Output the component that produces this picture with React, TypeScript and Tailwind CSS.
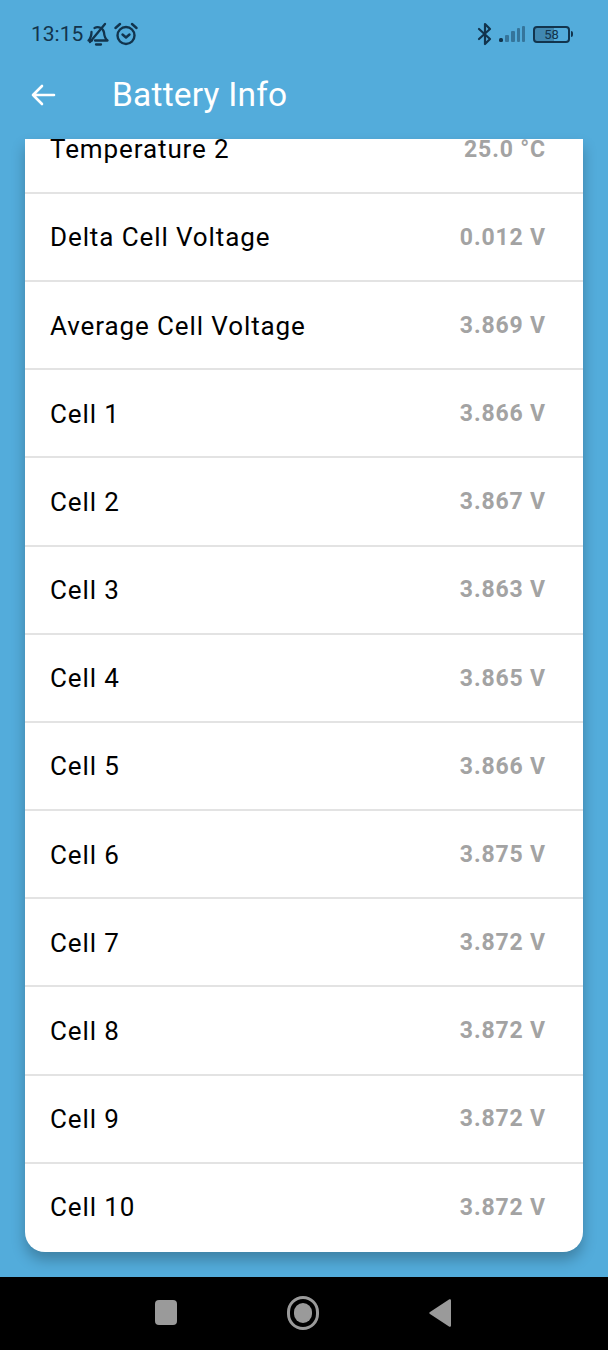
const rows = [
  { label: "Delta Cell Voltage", value: "0.012 V" },
  { label: "Average Cell Voltage", value: "3.869 V" },
  { label: "Cell 1", value: "3.866 V" },
  { label: "Cell 2", value: "3.867 V" },
  { label: "Cell 3", value: "3.863 V" },
  { label: "Cell 4", value: "3.865 V" },
  { label: "Cell 5", value: "3.866 V" },
  { label: "Cell 6", value: "3.875 V" },
  { label: "Cell 7", value: "3.872 V" },
  { label: "Cell 8", value: "3.872 V" },
  { label: "Cell 9", value: "3.872 V" },
  { label: "Cell 10", value: "3.872 V" },
];

function StatusBar() {
  return (
    <div className="h-[68px] pl-[31px] pr-[35px] pt-[22px] flex justify-between items-start text-[#12344d]">
      <div className="flex items-center h-6">
        <span className="text-[21px] leading-6">13:15</span>
        <svg width="24" height="24" viewBox="0 0 24 24" fill="none" stroke="currentColor" strokeWidth="2.300" strokeLinecap="round" strokeLinejoin="round" className="ml-[3px]">
          <path d="M8.500 6a6.500 6.500 0 0 1 9.500 4.500c.2 3 .8 5.800 3.500 8H9" />
          <path d="M5.500 10c0 3.500-.5 6-3 8.500h3.500" />
          <path d="M4 20 19 2" />
          <path d="M10 22.500h5" />
        </svg>
        <svg width="24" height="24" viewBox="0 0 24 24" fill="none" stroke="currentColor" strokeWidth="2.400" strokeLinecap="round" strokeLinejoin="round" className="ml-[4px]">
          <circle cx="12" cy="13.500" r="8.500" />
          <path d="M8.500 12.500l3.500 3 3.500-3" />
          <path d="M1.500 6 6 2M22.500 6 18 2" />
        </svg>
      </div>
      <div className="flex items-center h-6">
        <svg width="16" height="24" viewBox="0 0 16 24" fill="none" stroke="currentColor" strokeWidth="2.200" strokeLinecap="round" strokeLinejoin="round">
          <path d="M2 7l11 10-5 5V2l5 5L2 17" />
        </svg>
        <svg width="28" height="20" viewBox="0 0 28 20" fill="currentColor" className="ml-[5px]">
          <rect x="1" y="14" width="4" height="4" rx="1.500" />
          <rect x="7" y="11" width="4" height="7" rx="1" opacity="0.45" />
          <rect x="13" y="7" width="4" height="11" rx="1" opacity="0.45" />
          <rect x="19" y="4" width="3" height="14" rx="1" opacity="0.45" />
          <rect x="24" y="2" width="3" height="16" rx="1" opacity="0.45" />
        </svg>
        <div className="ml-[7px] w-[37px] h-[17px] rounded-[4px] border-2 border-[#12344d] bg-[linear-gradient(90deg,#4087b0_58%,transparent_58%)] flex items-center justify-center text-[13px] leading-none">
          58
        </div>
        <div className="ml-[1px] w-[2px] h-[6px] bg-[#12344d] rounded-r-sm" />
      </div>
    </div>
  );
}

export default function App() {
  return (
    <div className="w-[608px] h-[1350px] bg-[#53acdb] flex flex-col overflow-hidden font-['Roboto',sans-serif]">
      <StatusBar />
      <div className="h-[71px] pl-[30px] pb-[17px] flex items-center text-white">
        <svg width="26" height="26" viewBox="0 0 26 26" fill="none" stroke="currentColor" strokeWidth="2.600" strokeLinecap="round" strokeLinejoin="round">
          <path d="M24 13H3M12 4l-9 9 9 9" />
        </svg>
        <span className="ml-[56px] text-[33.5px] tracking-[0.2px] leading-none">Battery Info</span>
      </div>
      {/* list is scrolled, first row is cut off at the top */}
      <div className="mx-[25px] h-[1113px] bg-white rounded-b-[20px] shadow-[0_8px_14px_rgba(0,0,0,0.25)] flex flex-col">
        <div className="h-[55px] pl-[25px] pr-[37px] flex justify-between border-b-2 border-[#e3e3e3]">
          <span className="text-[26px] leading-[21px] tracking-[0.9px] text-black">Temperature 2</span>
          <span className="text-[23px] leading-[21px] tracking-[0.85px] font-bold text-[#a3a3a3]">25.0 °C</span>
        </div>
        {rows.map((row, i) => (
          <div
            key={row.label}
            className={`h-[88.2px] shrink-0 pl-[25px] pr-[37px] flex items-center justify-between ${
              i < rows.length - 1 ? "border-b-2 border-[#e3e3e3] pt-[2px]" : ""
            }`}
          >
            <span className="text-[26px] tracking-[0.9px] text-black">{row.label}</span>
            <span className="text-[23px] tracking-[0.85px] font-bold text-[#a3a3a3]">{row.value}</span>
          </div>
        ))}
      </div>
      <div className="mt-auto h-[73px] bg-black flex items-center justify-center gap-[110px] pb-[2px] pr-[2px]">
        <div className="w-[22px] h-[25px] rounded-[4px] bg-[#9a9a9a]" />
        <div className="w-[32px] h-[34px] rounded-full border-[3px] border-[#9a9a9a] flex items-center justify-center">
          <div className="w-[18px] h-[20px] rounded-full bg-[#9a9a9a]" />
        </div>
        <svg width="22" height="30" viewBox="0 0 22 30" fill="#9a9a9a">
          <path d="M20 1.500c1 -.6 2 0 2 1v25c0 1-1 1.600-2 1L1 16c-1-.6-1-1.400 0-2z" />
        </svg>
      </div>
    </div>
  );
}
